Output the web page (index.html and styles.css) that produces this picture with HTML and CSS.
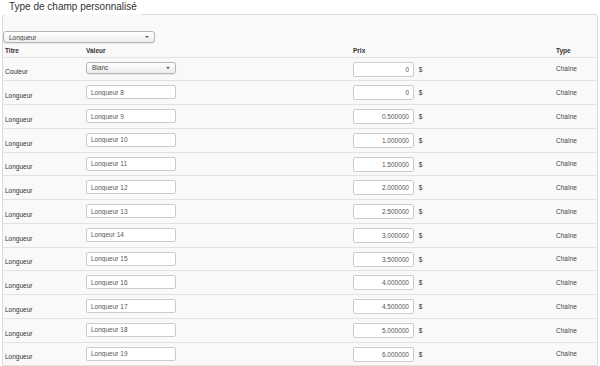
FILE: index.html
```html
<!DOCTYPE html>
<html>
  <head>
    <meta name="viewport" content="width=device-width, initial-scale=1" />
    <link rel="stylesheet" href="styles.css">
  </head>
  <body>
    <!-- Custom field type -->
    <fieldset class="field-box">
      <legend>Type de champ personnalisé</legend>

      <span class="select select-type">
        <select name="type">
          <option>Longueur</option>
        </select>
      </span>

      <table class="options">
        <colgroup>
          <col class="col-title" />
          <col class="col-value" />
          <col class="col-price" />
          <col />
        </colgroup>
        <thead>
          <tr>
            <th class="title">Titre</th>
            <th>Valeur</th>
            <th>Prix</th>
            <th>Type</th>
          </tr>
        </thead>
        <tbody>
          <tr>
            <td class="title">Couleur</td>
            <td class="value">
              <span class="select select-value">
                <select name="couleur">
                  <option>Blanc</option>
                </select>
              </span>
            </td>
            <td class="price"><input type="text" value="0" /> $</td>
            <td class="type">Chaîne</td>
          </tr>
          <tr>
            <td class="title">Longueur</td>
            <td class="value"><input type="text" value="Longueur 8" /></td>
            <td class="price"><input type="text" value="0" /> $</td>
            <td class="type">Chaîne</td>
          </tr>
          <tr>
            <td class="title">Longueur</td>
            <td class="value"><input type="text" value="Longueur 9" /></td>
            <td class="price"><input type="text" value="0.500000" /> $</td>
            <td class="type">Chaîne</td>
          </tr>
          <tr>
            <td class="title">Longueur</td>
            <td class="value"><input type="text" value="Longueur 10" /></td>
            <td class="price"><input type="text" value="1.000000" /> $</td>
            <td class="type">Chaîne</td>
          </tr>
          <tr>
            <td class="title">Longueur</td>
            <td class="value"><input type="text" value="Longueur 11" /></td>
            <td class="price"><input type="text" value="1.500000" /> $</td>
            <td class="type">Chaîne</td>
          </tr>
          <tr>
            <td class="title">Longueur</td>
            <td class="value"><input type="text" value="Longueur 12" /></td>
            <td class="price"><input type="text" value="2.000000" /> $</td>
            <td class="type">Chaîne</td>
          </tr>
          <tr>
            <td class="title">Longueur</td>
            <td class="value"><input type="text" value="Longueur 13" /></td>
            <td class="price"><input type="text" value="2.500000" /> $</td>
            <td class="type">Chaîne</td>
          </tr>
          <tr>
            <td class="title">Longueur</td>
            <td class="value"><input type="text" value="Longeur 14" /></td>
            <td class="price"><input type="text" value="3.000000" /> $</td>
            <td class="type">Chaîne</td>
          </tr>
          <tr>
            <td class="title">Longueur</td>
            <td class="value"><input type="text" value="Longueur 15" /></td>
            <td class="price"><input type="text" value="3.500000" /> $</td>
            <td class="type">Chaîne</td>
          </tr>
          <tr>
            <td class="title">Longueur</td>
            <td class="value"><input type="text" value="Longueur 16" /></td>
            <td class="price"><input type="text" value="4.000000" /> $</td>
            <td class="type">Chaîne</td>
          </tr>
          <tr>
            <td class="title">Longueur</td>
            <td class="value"><input type="text" value="Longueur 17" /></td>
            <td class="price"><input type="text" value="4.500000" /> $</td>
            <td class="type">Chaîne</td>
          </tr>
          <tr>
            <td class="title">Longueur</td>
            <td class="value"><input type="text" value="Longueur 18" /></td>
            <td class="price"><input type="text" value="5.000000" /> $</td>
            <td class="type">Chaîne</td>
          </tr>
          <tr>
            <td class="title">Longueur</td>
            <td class="value"><input type="text" value="Longueur 19" /></td>
            <td class="price"><input type="text" value="6.000000" /> $</td>
            <td class="type">Chaîne</td>
          </tr>
        </tbody>
      </table>
    </fieldset>
  </body>
</html>
```

FILE: styles.css
```css
body {
  font-family: "Liberation Sans", Arial, Helvetica, sans-serif;
  margin: 0;
  background: #fff;
  color: #333;
  font-size: 6.5px;
}

.field-box {
  margin: 0 2px 0 2px;
  padding: 3px 0 0 0;
  border: 1px solid #dcdcdc;
  border-radius: 3px;
  background: #f9f9f9;
  min-width: 0;
}

.field-box legend {
  font-size: 10px;
  line-height: 14px;
  color: #333;
  padding: 0 4px 14px 5px;
  margin-left: 1px;
}

/* Select boxes */
.select {
  position: relative;
  display: inline-block;
  vertical-align: top;
}

.select select {
  -webkit-appearance: none;
  appearance: none;
  font-family: inherit;
  font-size: 6.5px;
  color: #444;
  border: 1px solid #b5b5b5;
  border-radius: 3px;
  background: linear-gradient(#ffffff, #ececec);
  padding: 0 0 0 5px;
  margin: 0;
  display: block;
  box-sizing: border-box;
  box-shadow: 0 1px 1px rgba(0, 0, 0, 0.08);
}

.select::after {
  content: "";
  position: absolute;
  right: 6px;
  top: 5px;
  border-left: 2px solid transparent;
  border-right: 2px solid transparent;
  border-top: 2px solid #555;
}

.select-type select {
  width: 152px;
  height: 12px;
}

.select-value select {
  width: 90px;
  height: 12px;
}

/* Options table */
.options {
  width: 100%;
  border-collapse: collapse;
  table-layout: fixed;
  margin-top: 1px;
}

.col-title {
  width: 83px;
}

.col-value {
  width: 267px;
}

.col-price {
  width: 203px;
}

.options thead tr {
  height: 13px;
}

.options tbody tr {
  height: 23.75px;
}

.options th {
  text-align: left;
  font-weight: bold;
  padding: 1px 0 0 0;
  vertical-align: middle;
  border-bottom: 1px solid #e2e2e2;
}

.options td {
  padding: 0;
  border-bottom: 1px solid #e2e2e2;
  vertical-align: top;
}

.options .title {
  padding-left: 2px;
}

.options td.title {
  vertical-align: bottom;
  padding-bottom: 4px;
  line-height: 8px;
}

.options td.value {
  padding-top: 4px;
  line-height: 14px;
}

.options td.price {
  padding-top: 4px;
  line-height: 15px;
}

.options td.type {
  vertical-align: middle;
  color: #444;
}

input[type="text"] {
  font-family: inherit;
  font-size: 6.5px;
  color: #555;
  height: 14px;
  border: 1px solid #ccc;
  border-radius: 2px;
  background: #fff;
  padding: 0 4px;
  margin: 0;
  box-sizing: border-box;
  vertical-align: top;
}

.value input[type="text"] {
  width: 90px;
}

.price input[type="text"] {
  width: 61px;
  height: 15px;
  text-align: right;
  margin-right: 3px;
}
```
